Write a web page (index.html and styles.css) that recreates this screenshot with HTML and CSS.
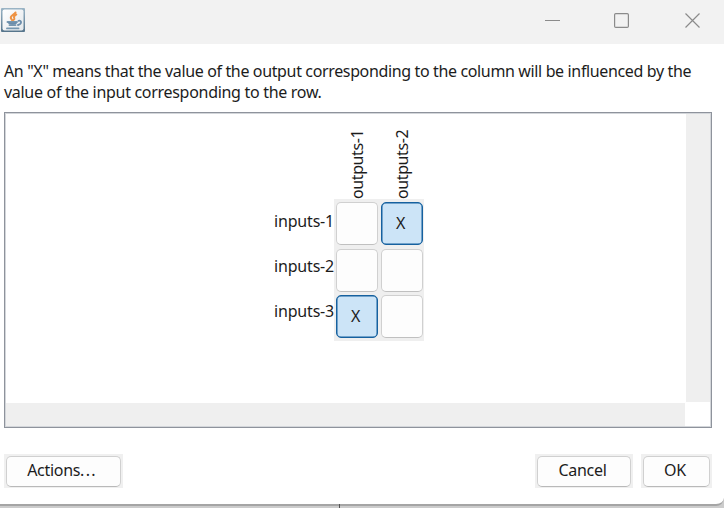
FILE: index.html
```html
<!DOCTYPE html>
<html lang="en">
<head>
<meta charset="utf-8">
<title>Dependencies</title>
<link rel="stylesheet" href="styles.css">
</head>
<body>
<main class="window">
  <header class="titlebar">
    <svg class="java" width="24" height="24" viewBox="0 0 24 24">
      <defs><linearGradient id="edge" x1="0" y1="0" x2="0" y2="1"><stop offset="0" stop-color="#9bb5c6"/><stop offset="1" stop-color="#55748b"/></linearGradient>
      <linearGradient id="face" x1="0" y1="0" x2="1" y2="1"><stop offset="0" stop-color="#fff"/><stop offset="1" stop-color="#e4e8eb"/></linearGradient></defs>
      <rect width="24" height="24" rx="1" fill="url(#edge)"/>
      <rect x="1.5" y="1.5" width="21" height="21" rx="2" fill="url(#face)"/>
      <g fill="none" stroke-linecap="round">
        <path d="M14.500 4.500C13.500 6.500 9.300 7.500 9.800 10c.2 1 1 1.300 1.300 2.300M15.300 6.500c-2 1.500-3 2.300-2 3.500.4.700 0 1.400-.8 2" stroke="#ee9344" stroke-width="2"/>
        <path d="M6.500 14h9.500M8.500 17.100h6M6 20.400h11.500" stroke="#7697b0" stroke-width="1.900"/>
        <path d="M8 15c1 1 6 1 7 0M17.500 12.800c3.500-.8 3.500 3.400-.5 4.200" stroke="#6b8dab" stroke-width="1.800"/>
      </g>
    </svg>
    <svg class="controls" width="156" height="16" viewBox="0 0 156 16" fill="none" stroke="#8b8b8b">
      <path d="M0 8.500h15"/>
      <rect x="69.600" y="1.600" width="13.800" height="13.800" rx="1.200" stroke-width="1.200"/>
      <path d="M140.500 1.500l14 14M154.500 1.500l-14 14" stroke-width="1.200"/>
    </svg>
  </header>
  <p class="message"><span class="line first">An "X" means that the value of the output corresponding to the column will be influenced by the</span><span class="line second">value of the input corresponding to the row.</span></p>
  <section class="pane">
    <div class="view">
      <div class="columns"><span>outputs-1</span><span>outputs-2</span></div>
      <div class="matrix">
        <div class="rows"><span>inputs-1</span><span>inputs-2</span><span>inputs-3</span></div>
        <div class="cells">
          <b></b><b class="on">X</b>
          <b></b><b></b>
          <b class="on">X</b><b></b>
        </div>
      </div>
    </div>
    <div class="vbar"></div>
    <div class="hbar"></div>
  </section>
  <footer class="actions">
    <div class="wrap more"><button>Actions<span class="dots">...</span></button></div>
    <div class="wrap cancel"><button>Cancel</button></div>
    <div class="wrap ok"><button>OK</button></div>
  </footer>
</main>
<div class="behind"></div>
</body>
</html>
```
FILE: styles.css
```css
* { box-sizing: border-box; }
body {
  margin: 0;
  width: 724px;
  height: 508px;
  overflow: hidden;
  background: #ccc;
  color: #1c1c1c;
  font: 16px/21px "Noto Sans", sans-serif;
  letter-spacing: -0.45px;
}
.window {
  height: 506px;
  background: #fff;
  border-bottom: 2px solid #a5a5a5;
  border-bottom-right-radius: 8px;
}
.titlebar {
  display: flex;
  justify-content: space-between;
  height: 44px;
  padding: 8px 23px 0 1px;
  background: #f2f2f2;
}
.controls { margin-top: 4px; }
.message { margin: 0; padding: 17px 0 0 4px; height: 68px; white-space: nowrap; }
.line { display: block; }
.first { letter-spacing: -0.36px; }
.second { letter-spacing: -0.3px; }
.pane {
  display: grid;
  grid-template-columns: 681px 1fr;
  grid-template-rows: 289px 1fr;
  width: 708px;
  height: 316px;
  margin-left: 4px;
  border: 1px solid #8e939c;
  box-shadow: inset 0 0 0 1px #d3d6da;
}
.view { padding: 14px 0 0 269px; }
.vbar { background: #efefef; margin: 1px 1px 0 0; }
.hbar { background: #efefef; margin: 1px 1px 1px 1px; }
.columns { display: flex; height: 72px; padding-left: 61px; letter-spacing: -0.4px; }
.columns span {
  width: 45px;
  writing-mode: vertical-rl;
  transform: rotate(180deg);
  line-height: 45px;
}
.matrix { display: flex; }
.rows { width: 60px; letter-spacing: -0.2px; }
.rows span { display: block; height: 45px; line-height: 45px; text-align: right; white-space: nowrap; }
.cells {
  display: grid;
  grid-template-columns: 42px 42px;
  grid-template-rows: 43px 43px 43px;
  gap: 3.500px 3px;
  width: 90px;
  height: 142px;
  padding: 3px 1.500px;
  background: #efefef;
}
.cells b {
  display: grid;
  place-items: center;
  padding-right: 2px;
  font-weight: 400;
  background: #fdfdfd;
  border: 1.500px solid #d0d0d0;
  border-bottom-color: #c0c0c0;
  border-radius: 5px;
}
.cells .on { background: #cce4f7; border: 1px solid #16619f; box-shadow: inset 0 0 0 0.500px #16619f; }
.actions { display: flex; padding: 26px 0 0 4px; }
.wrap { height: 34px; padding: 2px; background: #f0f0f0; }
.wrap button {
  display: block;
  width: 100%;
  height: 31px;
  padding: 0 3px 2px 0;
  font: inherit;
  color: inherit;
  letter-spacing: -0.3px;
  background: #fdfdfd;
  border: 1px solid #d0d0d0;
  border-bottom-color: #b9b9b9;
  border-radius: 5px;
}
.dots { letter-spacing: 1.300px; }
.more { width: 119px; }
.cancel { width: 98px; margin-left: 412px; }
.ok { width: 71px; margin-left: 8px; }
.behind { width: 1px; height: 4px; margin: -2px 0 0 339px; position: relative; background: #555; }
```
